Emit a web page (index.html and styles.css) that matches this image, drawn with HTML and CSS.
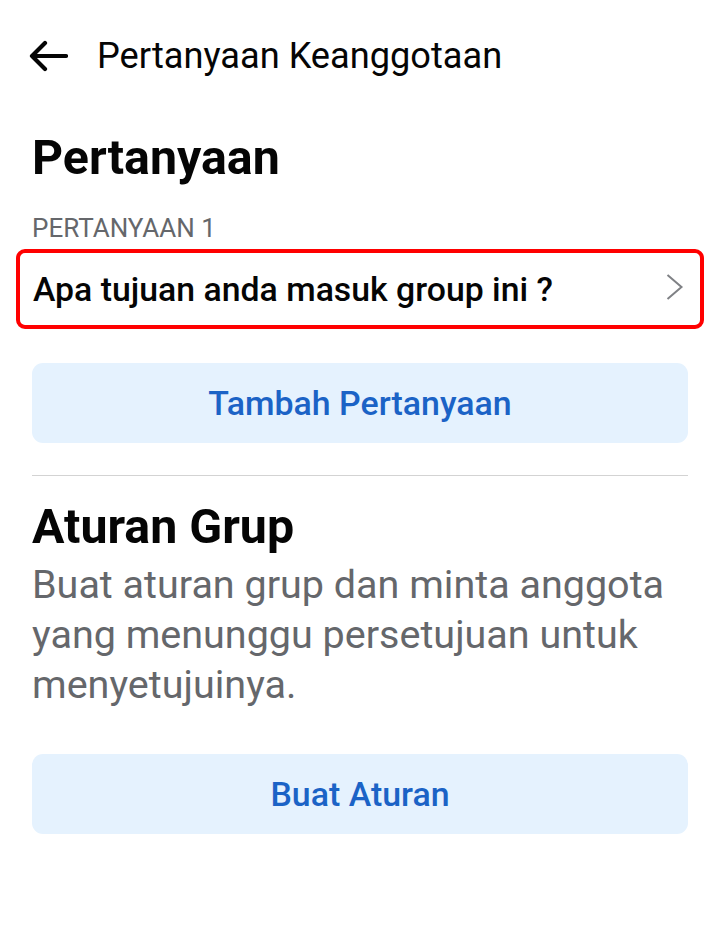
FILE: index.html
```html
<!DOCTYPE html>
<html lang="id">
<head>
<meta charset="utf-8">
<title>Pertanyaan Keanggotaan</title>
<link rel="stylesheet" href="styles.css">
</head>
<body>
<div class="screen">
  <header class="topbar">
    <button class="back" aria-label="Kembali">
      <svg viewBox="0 0 40 32" width="40" height="32">
        <path d="M38 16H4M17 3L4 16l13 13" fill="none" stroke="#050505" stroke-width="4.2" stroke-linecap="round" stroke-linejoin="round"/>
      </svg>
    </button>
    <h1 class="topbar-title">Pertanyaan Keanggotaan</h1>
  </header>

  <section class="section">
    <h2 class="section-title">Pertanyaan</h2>
    <div class="field-label">PERTANYAAN 1</div>
    <div class="question-row">
      <span class="question-text">Apa tujuan anda masuk group ini ?</span>
      <svg class="chevron" viewBox="0 0 18 26" width="18" height="26">
        <path d="M1.5 1L15.5 13L1.5 25" fill="none" stroke="#7f8185" stroke-width="2" stroke-linejoin="miter"/>
      </svg>
    </div>
    <button class="soft-btn">Tambah Pertanyaan</button>
  </section>

  <hr class="divider">

  <section class="section">
    <h2 class="section-title second">Aturan Grup</h2>
    <p class="desc">Buat aturan grup dan minta anggota yang menunggu persetujuan untuk menyetujuinya.</p>
    <button class="soft-btn lower">Buat Aturan</button>
  </section>
</div>
</body>
</html>
```

FILE: styles.css
```css
* { box-sizing: border-box; }

html, body {
  margin: 0;
  padding: 0;
  background: #ffffff;
}

body {
  font-family: Roboto, "Noto Sans", sans-serif;
  color: #050505;
  width: 720px;
  height: 930px;
  overflow: hidden;
}

.screen {
  padding: 0 32px;
}

.topbar {
  display: flex;
  align-items: center;
  height: 112px;
}

.back {
  border: 0;
  background: none;
  padding: 0;
  margin-left: -4px;
  width: 40px;
  height: 32px;
  display: flex;
}

.topbar-title {
  margin: 0 0 0 29px;
  font-size: 36.2px;
  font-weight: 400;
  line-height: 44px;
}

.section {
  display: flex;
  flex-direction: column;
}

.section-title {
  margin: 18px 0 0;
  font-size: 48.3px;
  font-weight: 700;
  line-height: 56px;
}

.section-title.second {
  margin-top: 23px;
}

.field-label {
  margin-top: 27px;
  font-size: 26px;
  color: #65676b;
  line-height: 30px;
}

.question-row {
  margin: 6px -16px 0;
  height: 80px;
  border: 4px solid #ff0000;
  border-radius: 9px;
  display: flex;
  align-items: center;
  justify-content: space-between;
  padding: 0 16px 4px 13px;
}

.question-text {
  font-size: 33.8px;
  font-weight: 500;
  margin-top: 4px;
}

.soft-btn {
  margin-top: 34px;
  height: 80px;
  border: 0;
  border-radius: 11px;
  background: #e5f2fe;
  color: #1b63c6;
  font-family: inherit;
  font-size: 33.9px;
  font-weight: 500;
  width: 100%;
}

.soft-btn.lower {
  margin-top: 44px;
}

.divider {
  margin: 32px 0 0;
  border: 0;
  border-top: 1px solid #d3d3d3;
}

.desc {
  margin: 5px 0 0;
  font-size: 39.5px;
  line-height: 50px;
  color: #65676b;
}
```
